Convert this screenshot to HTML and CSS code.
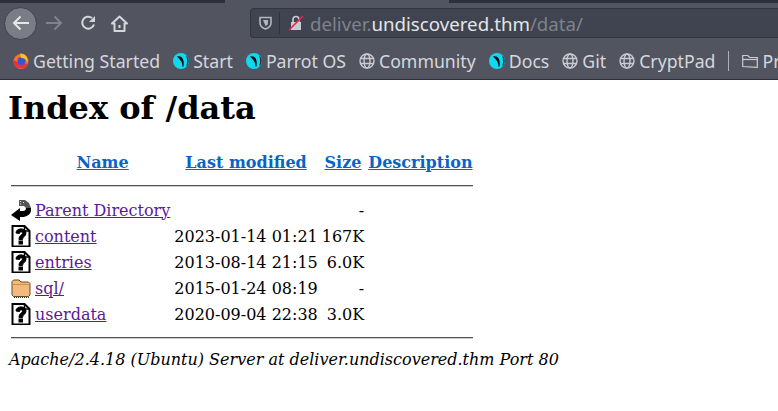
FILE: index.html
```html
<!DOCTYPE html>
<html>
<head>
	<title>Index of /data</title>
	<meta charset="utf-8">
	<link rel="stylesheet" href="styles.css">
</head>
<body>

	<svg class="defs" width="0" height="0">
		<symbol id="globe" viewBox="0 0 16 16">
			<g fill="none" stroke="#c9cbd3" stroke-width="1.4">
				<circle cx="8" cy="8" r="7"/>
				<ellipse cx="8" cy="8" rx="3" ry="7"/>
				<path d="M1 5.500h14M1 10.500h14"/>
			</g>
		</symbol>
		<symbol id="parrot" viewBox="0 0 16 16">
			<circle cx="8" cy="8" r="8" fill="#10d8ee"/>
			<path d="M13 2A8 8 0 0 1 13 14C14.500 10 14.500 6 13 2z" fill="#1c2a38"/>
			<path d="M4 3.500c3-1 5.500.5 6.300 3.500.5 2 .6 4.500.2 6.500l-1 .2c-.1-2.500-.6-4.800-1.900-6.300C6.700 6 5.300 5 4 3.500z" fill="#0c0c10"/>
		</symbol>
		<symbol id="unknown" viewBox="0 0 20 22">
			<path d="M1.500 1h12l5 5v15.500h-17z" fill="#fff" stroke="#000" stroke-width="2"/>
			<path d="M13.500 1v5h5" fill="none" stroke="#000" stroke-width="1.500"/>
			<path d="M5 8c0-5.500 10-5.500 10 0 0 3.500-3.500 3.500-3.500 6.500h-3.500c0-4.500 3.500-4.500 3.500-6.500 0-1.500-3-1.500-3 .5z" fill="#000" stroke="#000"/>
			<rect x="7.500" y="15.500" width="4.500" height="4" fill="#000"/>
		</symbol>
	</svg>

	<div class="browser">
		<div class="tabstrip">
			<div class="tab_dark left"></div>
			<div class="tab_active"></div>
			<div class="tab_dark right"></div>
		</div>
		<div class="navbar">
			<div class="back">
				<svg width="18" height="16" viewBox="0 0 18 16"><path d="M17 8H2M8.500 1.500 2 8l6.500 6.500" fill="none" stroke="#e6e7ea" stroke-width="2"/></svg>
			</div>
			<svg class="forward" width="18" height="16" viewBox="0 0 18 16"><path d="M1 8h15M9.500 1.500 16 8l-6.500 6.500" fill="none" stroke="#80838c" stroke-width="2"/></svg>
			<svg class="reload" width="16" height="16" viewBox="0 0 16 16"><path d="M14 9.500a6 6 0 1 1-2-6.500" fill="none" stroke="#d4d6dc" stroke-width="2"/><path d="M15 1v6H9z" fill="#d4d6dc"/></svg>
			<svg class="home" width="17" height="17" viewBox="0 0 17 17"><path d="M8.500 1.500 1 8.500h2.500V16h10V8.500H16z" fill="none" stroke="#d4d6dc" stroke-width="2" stroke-linejoin="round"/><rect x="7.500" y="10" width="2" height="3" fill="#d4d6dc"/></svg>
			<div class="urlbar">
				<svg class="shield" width="13" height="14" viewBox="0 0 13 14"><path d="M1 1.500h11V7c0 3-2.500 5-5.500 6C3.500 12 1 10 1 7z" fill="none" stroke="#b4b6bd" stroke-width="1.600"/><path d="M4 4h5v3c0 1.500-1 2.500-2.500 3z" fill="#b4b6bd"/></svg>
				<div class="url_sep"></div>
				<svg class="lock" width="16" height="16" viewBox="0 0 16 16"><path d="M3 7h10v8H3z" fill="#c9cbd1"/><path d="M5 7V4.500a3 3 0 0 1 6 0V7" fill="none" stroke="#c9cbd1" stroke-width="1.600"/><path d="M1 15 15 1" stroke="#e8234a" stroke-width="1.600"/></svg>
				<span class="url"><span class="url_dim">deliver.</span>undiscovered.thm<span class="url_dim">/data/</span></span>
			</div>
		</div>
		<div class="bookmarks">
			<div class="bookmark">
				<svg width="16" height="16" viewBox="0 0 16 16"><circle cx="8" cy="8.500" r="7.500" fill="#f7761c"/><path d="M.8 7c-.8 4 2 8.500 7.200 8.500 3.500 0 6-2 7-5L8 11z" fill="#e8323f"/><circle cx="8.500" cy="8" r="4" fill="#3a55d0"/><path d="M7 .5c5-.5 8.500 4 7.500 9C13.500 6.500 11 4.500 8 5z" fill="#ffc02a"/></svg>
				Getting Started
			</div>
			<div class="bookmark"><svg width="16" height="16"><use href="#parrot"/></svg>Start</div>
			<div class="bookmark"><svg width="16" height="16"><use href="#parrot"/></svg>Parrot OS</div>
			<div class="bookmark"><svg width="16" height="16"><use href="#globe"/></svg>Community</div>
			<div class="bookmark"><svg width="16" height="16"><use href="#parrot"/></svg>Docs</div>
			<div class="bookmark"><svg width="16" height="16"><use href="#globe"/></svg>Git</div>
			<div class="bookmark"><svg width="16" height="16"><use href="#globe"/></svg>CryptPad</div>
			<div class="bm_sep"></div>
			<div class="bookmark">
				<svg width="16" height="14" viewBox="0 0 16 14"><path d="M.7 12.500V1.500h5l2 2h7.600v9.800z" fill="none" stroke="#c9cbd3" stroke-width="1.200"/><path d="M1 5.500h14" stroke="#c9cbd3" stroke-width="1.200"/></svg>
				Pr
			</div>
		</div>
	</div>

	<div class="page">
		<h1>Index of /data</h1>
		<table>
			<tr class="head_row">
				<th></th>
				<th><a href="#">Name</a></th>
				<th><a href="#">Last modified</a></th>
				<th><a href="#">Size</a></th>
				<th><a href="#">Description</a></th>
			</tr>
			<tr><th colspan="5"><hr></th></tr>
			<tr>
				<td>
					<svg class="icon" width="20" height="22" viewBox="0 0 20 22"><path d="M8 1h6l4 3 2 5h-5l-2-2H8z" fill="#555"/><path d="M9 2.500h1M12 3.500h1M9 5h1" stroke="#ddd"/><path d="M20 9c1 5-3 9-9 9H9v4L0 16l9-7v3h3c2 0 3-1 3-3z" fill="#000"/></svg>
				</td>
				<td><a href="#">Parent Directory</a></td>
				<td></td>
				<td class="size">-</td>
				<td></td>
			</tr>
			<tr>
				<td><svg class="icon" width="20" height="22"><use href="#unknown"/></svg></td>
				<td><a href="#">content</a></td>
				<td>2023-01-14 01:21</td>
				<td class="size">167K</td>
				<td></td>
			</tr>
			<tr>
				<td><svg class="icon" width="20" height="22"><use href="#unknown"/></svg></td>
				<td><a href="#">entries</a></td>
				<td>2013-08-14 21:15</td>
				<td class="size">6.0K</td>
				<td></td>
			</tr>
			<tr>
				<td>
					<svg class="icon" width="20" height="22" viewBox="0 0 20 22"><path d="M1 18V4.500L2.500 3H8l2 2h7.500L19 6.500V18l-1.500 1.500h-15z" fill="#f4b97c" stroke="#6b4a22"/><path d="M1.500 7.500h17" stroke="#c98f50"/><path d="M3 20.500h15" stroke="#333" stroke-dasharray="1 1"/></svg>
				</td>
				<td><a href="#">sql/</a></td>
				<td>2015-01-24 08:19</td>
				<td class="size">-</td>
				<td></td>
			</tr>
			<tr>
				<td><svg class="icon" width="20" height="22"><use href="#unknown"/></svg></td>
				<td><a href="#">userdata</a></td>
				<td>2020-09-04 22:38</td>
				<td class="size">3.0K</td>
				<td></td>
			</tr>
			<tr><th colspan="5"><hr></th></tr>
		</table>
		<address>Apache/2.4.18 (Ubuntu) Server at deliver.undiscovered.thm Port 80</address>
	</div>

</body>
</html>
```

FILE: styles.css
```css
* {
	box-sizing: border-box;
}
html, body {
	margin: 0px;
	height: 411px;
	overflow: hidden;
}
body {
	background-color: white;
	font-family: "DejaVu Serif", serif;
	font-size: 16px;
}
.defs {
	position: absolute;
}
.browser {
	height: 80px;
	background-color: #52555f;
	border-bottom: 1px solid #2c2f38;
	font-family: "Noto Sans", sans-serif;
	color: #d5d7dd;
}
.tabstrip {
	display: flex;
	height: 3px;
}
.tab_dark {
	background-color: #2d303a;
}
.tab_dark.left {
	width: 225px;
}
.tab_active {
	width: 224px;
}
.tab_dark.right {
	flex: 1;
}
.navbar {
	display: flex;
	align-items: center;
	height: 38px;
	padding-left: 4px;
	padding-top: 2px;
}
.back {
	display: flex;
	align-items: center;
	justify-content: center;
	width: 33px;
	height: 33px;
	border-radius: 50%;
	background-color: #7a7d85;
	border: 1px solid #3f424c;
}
.forward {
	margin-left: 8px;
}
.reload {
	margin-left: 17px;
}
.home {
	margin-left: 15px;
}
.urlbar {
	display: flex;
	align-items: center;
	margin-left: 122px;
	flex: 1;
	height: 30px;
	background-color: #404450;
	border: 1px solid #33363f;
	border-right: 0px;
	border-radius: 4px 0px 0px 4px;
	padding-left: 8px;
}
.url_sep {
	width: 1px;
	height: 22px;
	margin-left: 7px;
	background-color: #2f323b;
}
.lock {
	margin-left: 8px;
}
.url {
	margin-left: 6px;
	font-size: 18.7px;
	color: #e4e5e8;
}
.url_dim {
	color: #7f828b;
}
.bookmarks {
	display: flex;
	align-items: center;
	height: 40px;
	padding-left: 13px;
	gap: 13px;
	font-size: 17.7px;
	white-space: nowrap;
}
.bookmark {
	display: flex;
	align-items: center;
	flex-shrink: 0;
	gap: 4px;
}
.bm_sep {
	flex-shrink: 0;
	width: 1px;
	height: 20px;
	background-color: #aeb0b7;
}
.page {
	padding: 8px;
}
h1 {
	margin: 0px;
	padding-top: 1px;
	font-size: 32px;
	margin-bottom: 21px;
}
a {
	color: #5a1a9a;
}
th a {
	color: #0a63c9;
}
.head_row th {
	height: 24px;
}
.size {
	text-align: right;
}
.icon {
	display: block;
}
hr {
	margin: 8px 0px;
	border: 0px;
	border-top: 1px solid #555;
	border-bottom: 1px solid #ccc;
}
address {
	margin-top: 0px;
	padding-left: 1px;
	font-style: italic;
}
```
